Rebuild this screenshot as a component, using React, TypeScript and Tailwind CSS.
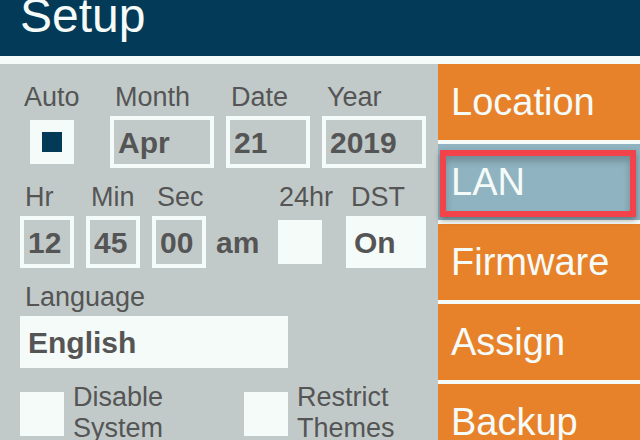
import type { ReactNode } from 'react';

const navItems = ['Location', 'LAN', 'Firmware', 'Assign', 'Backup'];

function Label({ children, className = '' }: { children: ReactNode; className?: string }): JSX.Element {
  return (
    <div className={`h-[30px] whitespace-nowrap text-[27px] leading-[30px] text-[#555] ${className}`}>{children}</div>
  );
}

function Check({ checked = false }: { checked?: boolean }): JSX.Element {
  return (
    <div className="flex h-[44px] w-[44px] items-center justify-center bg-[#f5fbf8]">
      {checked && <div className="h-5 w-5 bg-[#023a57]" />}
    </div>
  );
}

function Field({
  label,
  value,
  width,
  filled = false,
  className = '',
}: {
  label: string;
  value: string;
  width: string;
  filled?: boolean;
  className?: string;
}): JSX.Element {
  return (
    <div className={`flex flex-col ${className}`}>
      <Label className="pl-[5px]">{label}</Label>
      <div
        className={`mt-1 flex h-[52px] items-center border-4 border-[#f5fbf8] pl-1 text-[30px] font-bold text-[#555] ${width} ${
          filled ? 'bg-[#f5fbf8]' : ''
        }`}
      >
        {value}
      </div>
    </div>
  );
}

function TwoLineCheck({ lines, className = '' }: { lines: [string, string]; className?: string }): JSX.Element {
  return (
    <div className={`flex ${className}`}>
      <div className="mt-[10px]">
        <Check />
      </div>
      <div className="ml-[9px] text-[27px] leading-[31px] text-[#555]">
        {lines[0]}
        <br />
        {lines[1]}
      </div>
    </div>
  );
}

export default function App(): JSX.Element {
  return (
    <div className="h-[440px] w-[640px] overflow-hidden bg-[#f5fbf8] font-['Liberation_Sans',Arial,sans-serif]">
      <header className="h-[56px] overflow-hidden bg-[#023a57] pl-[20px] text-[48px] leading-[32px] text-[#f5fbf8]">
        Setup
      </header>
      <div className="mt-[8px] flex h-[376px]">
        <section className="flex w-[438px] flex-col gap-[14px] bg-[#c1cac9] pt-[18px]">
          <div className="flex">
            <div className="ml-[24px] w-[86px]">
              <Label>Auto</Label>
              <div className="mt-1 flex h-[52px] items-center pl-[6px]">
                <Check checked />
              </div>
            </div>
            <Field label="Month" value="Apr" width="w-[104px]" />
            <Field label="Date" value="21" width="w-[84px]" className="ml-[12px]" />
            <Field label="Year" value="2019" width="w-[104px]" className="ml-[12px]" />
          </div>

          <div className="flex pl-[20px]">
            <Field label="Hr" value="12" width="w-[54px]" />
            <Field label="Min" value="45" width="w-[54px]" className="ml-[12px]" />
            <Field label="Sec" value="00" width="w-[54px]" className="ml-[12px]" />
            <div className="ml-[10px] w-[62px]">
              <div className="h-[30px]" />
              <div className="mt-1 flex h-[52px] items-center text-[30px] font-bold text-[#555]">am</div>
            </div>
            <div className="w-[68px]">
              <Label className="pl-px">24hr</Label>
              <div className="mt-1 flex h-[52px] items-center">
                <Check />
              </div>
            </div>
            <Field label="DST" value="On" width="w-[80px]" filled />
          </div>

          <div className="pl-[20px]">
            <Field label="Language" value="English" width="w-[268px]" filled />
          </div>

          <div className="flex pl-[20px]">
            <TwoLineCheck lines={['Disable', 'System']} className="w-[224px]" />
            <TwoLineCheck lines={['Restrict', 'Themes']} />
          </div>
        </section>

        <nav className="flex w-[202px] flex-col gap-[4px]">
          {navItems.map((item) =>
            item === 'LAN' ? (
              <div
                key={item}
                className="relative flex h-[76px] shrink-0 items-center bg-[#8fb3c0] pl-[13px] text-[38px] text-[#f5fbf8]"
              >
                <div className="absolute bottom-[3px] left-[2px] right-[4px] top-[6px] border-[6px] border-[#f2434a] shadow-[0_3px_6px_rgba(0,0,0,0.35),inset_0_5px_7px_rgba(0,0,0,0.22)]" />
                <span className="relative">{item}</span>
              </div>
            ) : (
              <div
                key={item}
                className="flex h-[76px] shrink-0 items-center bg-[#e8822a] pl-[13px] text-[38px] text-[#f5fbf8]"
              >
                {item}
              </div>
            ),
          )}
        </nav>
      </div>
    </div>
  );
}
